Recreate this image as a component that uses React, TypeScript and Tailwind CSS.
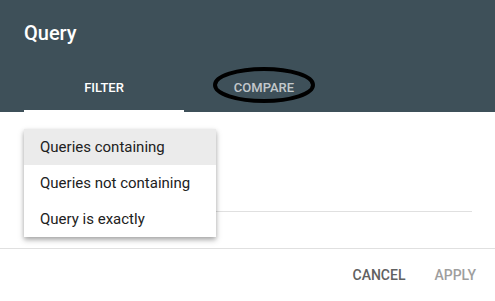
import React from "react";

export default function App() {
  return (
    <div
      className="relative w-[495px] h-[301px] overflow-hidden bg-white"
      style={{ fontFamily: "Roboto, 'Liberation Sans', sans-serif" }}
    >
      {/* Header */}
      <div className="h-[112px] bg-[#3e5059] flex flex-col">
        <div className="px-6 pt-[21px] h-[64px]">
          <div className="text-[20px] leading-[24px] font-medium text-white">Query</div>
        </div>
        <div className="flex px-6 h-[48px]">
          <div className="relative w-[160px] flex items-center justify-center text-[13px] font-medium text-white">
            FILTER
            <div className="absolute left-0 right-0 bottom-0 h-[2px] bg-white" />
          </div>
          <div className="relative w-[160px] flex items-center justify-center text-[13px] font-medium text-white/70">
            COMPARE
            <svg
              className="absolute left-[29px] top-[3px]"
              width="102"
              height="36"
              viewBox="0 0 102 36"
            >
              <ellipse cx="51" cy="18" rx="49" ry="16" fill="none" stroke="#000" strokeWidth="4" />
            </svg>
          </div>
        </div>
      </div>

      {/* Body */}
      <div className="h-[136px] px-6 pt-[99px]">
        <div className="h-px bg-[#e0e0e0] w-[448px]" />
      </div>

      {/* Footer */}
      <div className="h-[53px] border-t border-[#e0e0e0] flex items-center justify-end pr-[19px] gap-[29px] text-[14px] font-medium">
        <span className="text-[#616161]">CANCEL</span>
        <span className="text-[#9e9e9e]">APPLY</span>
      </div>

      {/* Dropdown menu */}
      <div className="absolute left-[24px] top-[129px] w-[192px] bg-white shadow-[0_3px_6px_rgba(0,0,0,0.25),0_2px_4px_rgba(0,0,0,0.15)] text-[15px] text-[#212121]">
        <div className="h-[36px] flex items-center px-4 bg-[#ebebeb]">Queries containing</div>
        <div className="h-[36px] flex items-center px-4">Queries not containing</div>
        <div className="h-[36px] flex items-center px-4">Query is exactly</div>
      </div>
    </div>
  );
}
